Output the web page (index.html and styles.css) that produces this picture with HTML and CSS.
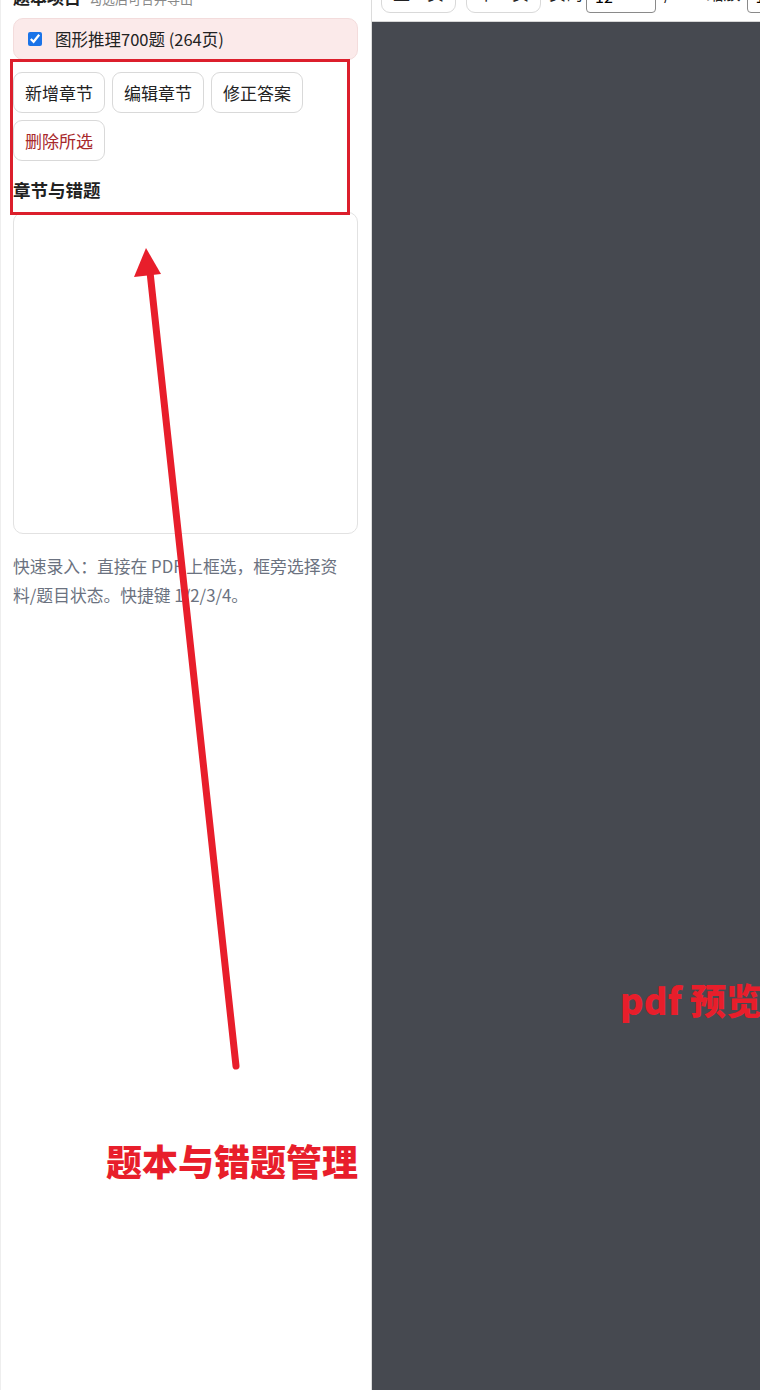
FILE: index.html
```html
<!DOCTYPE html>
<html lang="zh-CN">
<head>
<meta charset="utf-8">
<title>题本与错题管理</title>
<link rel="stylesheet" href="styles.css">
</head>
<body>
<div class="app">
  <aside class="sidebar">
    <div class="side-head">
      <span class="side-title">题本项目</span>
      <span class="side-sub">勾选后可合并导出</span>
    </div>
    <label class="project">
      <input type="checkbox" checked>
      <span>图形推理700题 (264页)</span>
    </label>
    <div class="actions">
      <button class="btn">新增章节</button>
      <button class="btn">编辑章节</button>
      <button class="btn">修正答案</button>
      <button class="btn danger">删除所选</button>
    </div>
    <h3 class="section-title">章节与错题</h3>
    <div class="chapter-box"></div>
    <p class="hint">快速录入：直接在 PDF 上框选，框旁选择资料/题目状态。快捷键 1/2/3/4。</p>
  </aside>
  <main class="viewer">
    <div class="toolbar">
      <button class="btn">上一页</button>
      <button class="btn">下一页</button>
      <span class="tb-label">页码</span>
      <input class="page-input" type="text" value="12">
      <span class="tb-label">/ 264 缩放</span>
      <input class="zoom-input" type="text" value="100">
    </div>
    <div class="canvas"></div>
  </main>

  <div class="anno-box"></div>
  <svg class="anno-arrow" width="760" height="1390" viewBox="0 0 760 1390">
    <line x1="236" y1="1066" x2="150" y2="272" stroke="#e81e2b" stroke-width="7" stroke-linecap="round"/>
    <polygon points="146,248 134,277 161,274" fill="#e81e2b"/>
  </svg>
  <div class="anno-label anno-left">题本与错题管理</div>
  <div class="anno-label anno-right">pdf 预览</div>
</div>
</body>
</html>
```

FILE: styles.css
```css
* { box-sizing: border-box; }

html, body {
  margin: 0;
  padding: 0;
  width: 760px;
  height: 1390px;
  overflow: hidden;
  background: #fff;
  font-family: "Noto Sans CJK SC", "Noto Sans", sans-serif;
  color: #222;
}

.app {
  position: relative;
  display: flex;
  width: 760px;
  height: 1390px;
}

.sidebar {
  width: 372px;
  flex: none;
  padding: 0 13px 0 12px;
  border-left: 1px solid #eeeeee;
  border-right: 1px solid #dcdcdc;
  background: #fff;
}

.side-head {
  margin-top: -16px;
  height: 25px;
  display: flex;
  align-items: baseline;
  gap: 8px;
}

.side-title {
  font-size: 17px;
  font-weight: 700;
  color: #222;
}

.side-sub {
  font-size: 13px;
  color: #888;
}

.project {
  margin-top: 9px;
  height: 42px;
  display: flex;
  align-items: center;
  gap: 13px;
  padding: 0 14px;
  background: #fbeaea;
  border: 1px solid #f3dcdc;
  border-radius: 10px;
  font-size: 16.5px;
  color: #222;
}

.project input {
  margin: 0;
  width: 14px;
  height: 14px;
  accent-color: #1a73e8;
}

.actions {
  margin-top: 12px;
  display: flex;
  flex-wrap: wrap;
  gap: 7px;
}

.btn {
  height: 41px;
  padding: 0 11px;
  border: 1px solid #d9d9d9;
  border-radius: 9px;
  background: #fff;
  font-family: inherit;
  font-size: 17px;
  color: #222;
  white-space: nowrap;
}

.btn.danger {
  color: #a8282b;
}

.section-title {
  margin: 17px 0 0;
  height: 24px;
  line-height: 24px;
  font-size: 17.5px;
  font-weight: 700;
  color: #222;
}

.chapter-box {
  margin-top: 10px;
  height: 322px;
  border: 1px solid #e2e2e2;
  border-radius: 10px;
  background: #fff;
}

.hint {
  margin: 18px 0 0;
  max-width: 336px;
  font-size: 16.8px;
  line-height: 29px;
  color: #6b7280;
}

.viewer {
  flex: 1;
  display: flex;
  flex-direction: column;
  background: #464950;
  min-width: 0;
}

.toolbar {
  margin-top: -37px;
  height: 59px;
  flex: none;
  display: flex;
  align-items: center;
  gap: 10px;
  padding: 0 9px;
  background: #fff;
  border-bottom: 1px solid #d6d6d6;
  white-space: nowrap;
  overflow: hidden;
}

.tb-label {
  font-size: 17px;
  color: #222;
  margin-left: -2px;
}

.page-input,
.zoom-input {
  height: 34px;
  margin-top: 8px;
  border: 1px solid #8a8a8a;
  border-radius: 4px;
  font-family: inherit;
  font-size: 16px;
  padding: 0 8px;
  flex: none;
}

.page-input { width: 70px; margin-left: -7px; }
.zoom-input { width: 60px; margin-left: -4px; }

.canvas {
  flex: 1;
  background: #464950;
}

.anno-box {
  position: absolute;
  left: 10px;
  top: 59px;
  width: 340px;
  height: 156px;
  border: 3px solid #dc1f2c;
  pointer-events: none;
}

.anno-arrow {
  position: absolute;
  left: 0;
  top: 0;
  pointer-events: none;
}

.anno-label {
  position: absolute;
  font-family: "Noto Sans CJK SC", "Noto Sans", sans-serif;
  font-weight: 900;
  font-size: 36px;
  line-height: 40px;
  color: #e81e2b;
  white-space: nowrap;
}

.anno-left {
  left: 106px;
  top: 1140px;
}

.anno-right {
  left: 620px;
  top: 979px;
}
```
